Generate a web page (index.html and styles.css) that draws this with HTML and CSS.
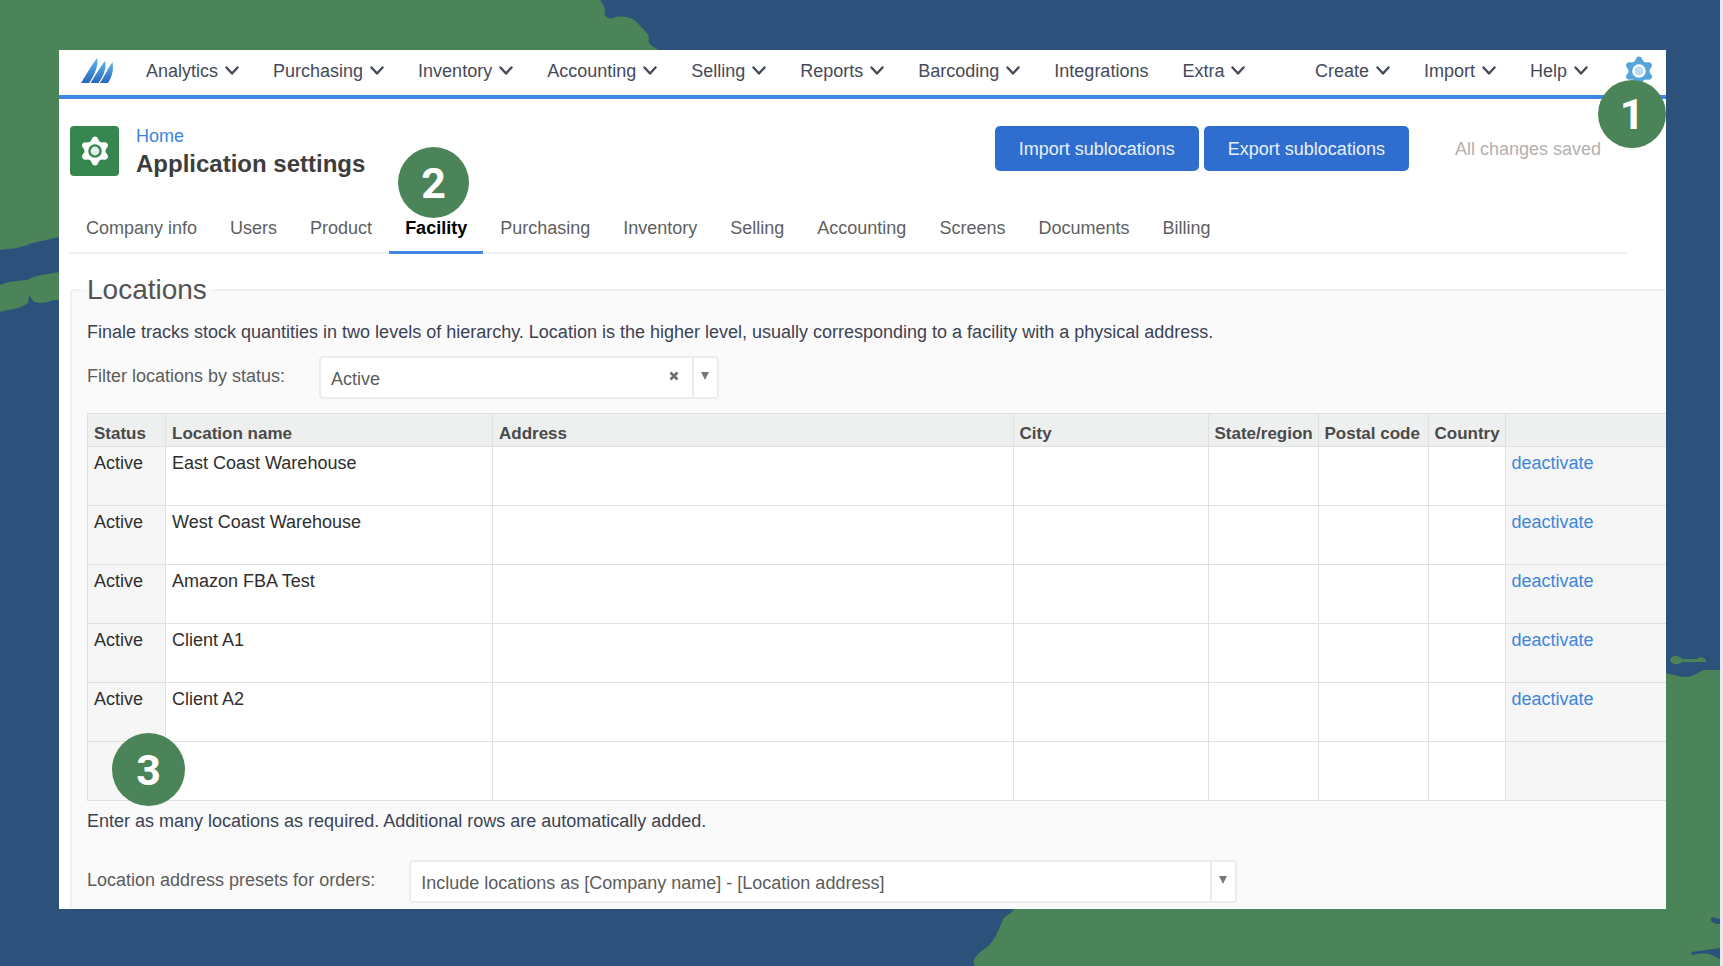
FILE: index.html
```html
<!DOCTYPE html>
<html lang="en">
<head>
  <meta charset="UTF-8" />
  <meta name="viewport" content="width=device-width, initial-scale=1.0" />
  <title>Application settings</title>
  <link rel="stylesheet" href="styles.css">
</head>
<body>
  <svg class="defs" aria-hidden="true">
    <defs>
      <linearGradient id="fin" x1="0" y1="1" x2="0" y2="0">
        <stop offset="0" stop-color="#2b66bd" />
        <stop offset="1" stop-color="#5cb6ea" />
      </linearGradient>
    </defs>
    <symbol id="chevron" viewBox="0 0 14 10">
      <path d="M1.5 1.5 7 7.5 12.5 1.5" fill="none" stroke="currentColor" stroke-width="2.4" stroke-linecap="round" stroke-linejoin="round" />
    </symbol>
    <symbol id="gear" viewBox="0 0 30 30">
      <g fill="currentColor">
        <circle cx="15" cy="15" r="10.6" />
        <path id="teeth" d="M12.6 1.6Q15 -.6 17.4 1.6L19.6 6V24L17.4 28.4Q15 30.6 12.6 28.4L10.4 24V6Z" />
        <use href="#teeth" transform="rotate(60 15 15)" />
        <use href="#teeth" transform="rotate(120 15 15)" />
      </g>
      <circle class="gear-ring" cx="15" cy="15" r="5.6" />
    </symbol>
  </svg>

  <!-- Painted background -->
  <svg class="backdrop" viewBox="0 0 1720 966" preserveAspectRatio="none" aria-hidden="true">
    <g fill="#4c8459">
      <path d="M0 0H600C603 4 605 7 605 11C603 16 609 21 615 17C629 15 636 20 640 26C645 31 649 34 649 38C646 45 655 47 660 51V200H70V235C50 239 35 242 27 245C15 250 8 248 0 250Z" />
      <path d="M0 285C8 281 18 281 27 280C40 273 55 274 70 270V300L53 300C45 304 39 303 34 302L29 295 28 303C18 310 8 309 0 312Z" />
      <path d="M975 966C972 961 974 957 984 949C994 944 1001 925 1003 919C1007 914 1011 916 1016 905L1660 905V673C1672 673 1678 677 1686 677C1697 676 1700 670 1705 670H1720V966Z" />
      <path d="M1670 660C1671 655 1679 655 1682 659H1697C1701 655 1707 659 1706 662H1682C1677 666 1671 664 1670 660Z" />
    </g>
    <path d="M1711 918C1713 917 1716 918 1720 919V924C1714 924 1710 922 1711 918ZM1691 952C1701 951 1710 949 1720 948V959C1712 956 1711 951 1692 955Z" fill="#2c527b" />
  </svg>

  <main class="panel">
    <nav class="topbar" aria-label="Main">
      <a class="logo" href="#" aria-label="Dashboard">
        <svg viewBox="0 0 32 26" width="32" height="26" fill="url(#fin)">
          <path d="M0 25C5 17 10 8 16 0C18 7 13 18 8 25Z" />
          <path d="M9.5 25C14 18 19 9 24 3C26 10 22 19 17.5 25Z" />
          <path d="M19 25C23 19 27 10 31.5 4C33 12 31 19 27 25Z" />
        </svg>
      </a>
      <div class="menu">
        <button type="button">Analytics <svg class="chevron"><use href="#chevron" /></svg></button>
        <button type="button">Purchasing <svg class="chevron"><use href="#chevron" /></svg></button>
        <button type="button">Inventory <svg class="chevron"><use href="#chevron" /></svg></button>
        <button type="button">Accounting <svg class="chevron"><use href="#chevron" /></svg></button>
        <button type="button">Selling <svg class="chevron"><use href="#chevron" /></svg></button>
        <button type="button">Reports <svg class="chevron"><use href="#chevron" /></svg></button>
        <button type="button">Barcoding <svg class="chevron"><use href="#chevron" /></svg></button>
        <a href="#">Integrations</a>
        <button type="button">Extra <svg class="chevron"><use href="#chevron" /></svg></button>
      </div>
      <div class="menu menu-right">
        <button type="button">Create <svg class="chevron"><use href="#chevron" /></svg></button>
        <button type="button">Import <svg class="chevron"><use href="#chevron" /></svg></button>
        <button type="button">Help <svg class="chevron"><use href="#chevron" /></svg></button>
        <a class="settings-link" href="#" aria-label="Settings">
          <svg width="30" height="30"><use href="#gear" /></svg>
          <span class="step step-1">1</span>
        </a>
      </div>
    </nav>

    <header class="page-header">
      <div class="page-icon">
        <svg width="30" height="30"><use href="#gear" /></svg>
      </div>
      <div class="page-title">
        <a href="#">Home</a>
        <h1>Application settings</h1>
      </div>
      <div class="actions">
        <button type="button" class="btn">Import sublocations</button>
        <button type="button" class="btn">Export sublocations</button>
      </div>
      <p class="save-state">All changes saved</p>
    </header>

    <nav class="tabs" aria-label="Settings">
      <a href="#">Company info</a>
      <a href="#">Users</a>
      <a href="#">Product</a>
      <a href="#" class="active" aria-current="page">Facility<span class="step step-2">2</span></a>
      <a href="#">Purchasing</a>
      <a href="#">Inventory</a>
      <a href="#">Selling</a>
      <a href="#">Accounting</a>
      <a href="#">Screens</a>
      <a href="#">Documents</a>
      <a href="#">Billing</a>
    </nav>

    <fieldset class="locations">
      <legend>Locations</legend>
      <p class="intro">Finale tracks stock quantities in two levels of hierarchy. Location is the higher level, usually corresponding to a facility with a physical address.</p>

      <div class="field">
        <label for="status">Filter locations by status:</label>
        <div class="combo combo-status">
          <select id="status">
            <option>Active</option>
          </select>
          <button type="button" class="clear" aria-label="Clear">
            <svg viewBox="0 0 10 10" width="10" height="10"><path d="M1.5 1.5 8.5 8.5M8.5 1.5 1.5 8.5" stroke="currentColor" stroke-width="2.6" /></svg>
          </button>
        </div>
      </div>

      <table>
        <colgroup>
          <col class="col-status">
          <col class="col-name">
          <col class="col-address">
          <col class="col-city">
          <col class="col-state">
          <col class="col-postal">
          <col class="col-country">
          <col class="col-action">
        </colgroup>
        <thead>
          <tr>
            <th>Status</th>
            <th>Location name</th>
            <th>Address</th>
            <th>City</th>
            <th>State/region</th>
            <th>Postal code</th>
            <th>Country</th>
            <th></th>
          </tr>
        </thead>
        <tbody>
          <tr><td>Active</td><td>East Coast Warehouse</td><td></td><td></td><td></td><td></td><td></td><td><a href="#">deactivate</a></td></tr>
          <tr><td>Active</td><td>West Coast Warehouse</td><td></td><td></td><td></td><td></td><td></td><td><a href="#">deactivate</a></td></tr>
          <tr><td>Active</td><td>Amazon FBA Test</td><td></td><td></td><td></td><td></td><td></td><td><a href="#">deactivate</a></td></tr>
          <tr><td>Active</td><td>Client A1</td><td></td><td></td><td></td><td></td><td></td><td><a href="#">deactivate</a></td></tr>
          <tr><td>Active</td><td>Client A2</td><td></td><td></td><td></td><td></td><td></td><td><a href="#">deactivate</a></td></tr>
          <tr><td class="step-cell"><span class="step step-3">3</span></td><td></td><td></td><td></td><td></td><td></td><td></td><td></td></tr>
        </tbody>
      </table>
      <p class="hint">Enter as many locations as required. Additional rows are automatically added.</p>

      <div class="field field-presets">
        <label for="presets">Location address presets for orders:</label>
        <div class="combo combo-presets">
          <select id="presets">
            <option>Include locations as [Company name] - [Location address]</option>
          </select>
        </div>
      </div>
    </fieldset>
  </main>
</body>
</html>
```
FILE: styles.css
```css
* {
  margin: 0;
  padding: 0;
  box-sizing: border-box;
}

body {
  position: relative;
  display: flex;
  min-height: 100vh;
  padding: 50px 54px 57px 59px;
  border-right: 3px solid #e8e9ee;
  background: #2c527b;
  font-family: "Liberation Sans", Arial, Helvetica, sans-serif;
  font-size: 18px;
  line-height: 24px;
  color: #3c4254;
}

a {
  color: #3b86dc;
  text-decoration: none;
}

button,
select {
  font: inherit;
  color: inherit;
}

button {
  border: none;
  background: none;
  cursor: pointer;
}

.defs {
  position: absolute;
  width: 0;
  height: 0;
}

.backdrop {
  position: absolute;
  inset: 0;
  width: 100%;
  height: 100%;
}

.panel {
  position: relative;
  flex: 1;
  min-width: 0;
  overflow: hidden;
  background: #fff;
}

/* Top bar */
.topbar {
  display: flex;
  align-items: center;
  height: 49px;
  padding: 0 12px 4px 22px;
  border-bottom: 4px solid #3f87e5;
}

.logo {
  display: flex;
  margin-right: 33px;
}

.menu {
  display: flex;
  align-items: center;
  gap: 34px;
}

.menu-right {
  margin-left: auto;
}

.menu button,
.menu a {
  display: flex;
  align-items: center;
  gap: 7px;
  color: #454a59;
  white-space: nowrap;
}

.chevron {
  width: 14px;
  height: 10px;
}

.menu .settings-link {
  position: relative;
  margin-left: 2px;
  color: #55a5db;
}

.gear-ring {
  fill: var(--hub, #b9dcf2);
  stroke: var(--ring, #fff);
  stroke-width: 2.4;
}

/* Numbered steps */
.step {
  position: absolute;
  z-index: 2;
  display: flex;
  align-items: center;
  justify-content: center;
  width: 71px;
  height: 71px;
  border-radius: 50%;
  background: #4c8459;
  color: #fff;
  font-family: Roboto, sans-serif;
  font-size: 43px;
  font-weight: 700;
}

.step-1 {
  top: 24px;
  right: -12px;
  width: 68px;
  height: 68px;
}

.step-2 {
  bottom: 33px;
  left: 9px;
}

.step-3 {
  top: -9px;
  left: 24px;
  width: 73px;
  height: 73px;
}

/* Page header */
.page-header {
  display: flex;
  align-items: flex-start;
  padding: 27px 65px 0 11px;
}

.page-icon {
  --ring: #38864f;
  --hub: #e3f0e7;
  display: flex;
  align-items: center;
  justify-content: center;
  width: 49px;
  height: 50px;
  margin-right: 17px;
  border-radius: 4px;
  background: #38864f;
  color: #fff;
}

.page-title a {
  display: block;
  line-height: 20px;
}

.page-title h1 {
  margin-top: 4px;
  font-size: 24px;
  line-height: 28px;
  color: #3d3d3d;
}

.actions {
  display: flex;
  gap: 5px;
  margin-left: auto;
}

.btn {
  height: 45px;
  padding: 0 24px;
  border-radius: 5px;
  background: #2f6ecf;
  color: #e9f1fc;
}

.save-state {
  margin-left: 46px;
  line-height: 46px;
  color: #b3b0b0;
}

/* Tabs */
.tabs {
  display: flex;
  gap: 1px;
  margin: 38px 40px 0 11px;
  border-bottom: 2px solid #efefef;
}

.tabs a {
  position: relative;
  margin-bottom: -2px;
  padding: 0 16px 11px;
  border-bottom: 3px solid transparent;
  color: #606060;
}

.tabs .active {
  border-color: #3f87e5;
  color: #000;
  font-weight: 700;
}

/* Locations */
.locations {
  min-width: 0;
  margin: 20px 0 0 11px;
  padding: 0 0 5px 15px;
  border: 2px solid #efefef;
  border-width: 2px 0 0 2px;
  border-radius: 4px 0 0 0;
  background: #fafafa;
}

.locations legend {
  margin-left: -6px;
  padding: 0 6px;
  font-size: 28px;
  line-height: 32px;
  color: #545454;
}

.intro {
  margin-top: 14px;
}

.field {
  display: flex;
  align-items: flex-start;
  gap: 34px;
  margin-top: 12px;
  color: #5c5c5c;
}

.field label {
  line-height: 41px;
}

.combo {
  position: relative;
}

.combo-status {
  width: 400px;
}

.combo-presets {
  width: 828px;
}

.combo select {
  display: block;
  width: 100%;
  height: 43px;
  padding: 2px 60px 0 10px;
  border: 2px solid #ededed;
  border-radius: 4px;
  background: #fff;
  appearance: none;
}

.combo::before {
  content: "";
  position: absolute;
  top: 2px;
  right: 25px;
  bottom: 2px;
  width: 2px;
  background: #ededed;
}

.combo::after {
  content: "";
  position: absolute;
  top: 16px;
  right: 10px;
  border: 4px solid transparent;
  border-top: 8px solid #777;
  border-bottom: 0;
}

.clear {
  position: absolute;
  top: 15px;
  right: 40px;
  display: flex;
  color: #6e6e6e;
}

table {
  width: 100%;
  margin-top: 14px;
  border-collapse: collapse;
  table-layout: fixed;
}

.col-status { width: 78px; }
.col-name { width: 327px; }
.col-city { width: 195px; }
.col-state { width: 110px; }
.col-postal { width: 110px; }
.col-country { width: 77px; }
.col-action { width: 161px; }

th,
td {
  padding: 4px 6px;
  border: 1px solid #dfe1e1;
  text-align: left;
  vertical-align: top;
  white-space: nowrap;
}

th:last-child,
td:last-child {
  border-right: none;
}

th {
  height: 33px;
  padding: 8px 5px 0 6px;
  background: #eef0f0;
  color: #4a4a4a;
  font-size: 17px;
}

td {
  height: 59px;
  background: #fff;
  color: #2e2e2e;
}

td:first-child,
td:last-child {
  background: #f6f6f6;
}

.step-cell {
  position: relative;
}

.hint {
  margin-top: 8px;
}

.field-presets {
  margin-top: 27px;
}
```
